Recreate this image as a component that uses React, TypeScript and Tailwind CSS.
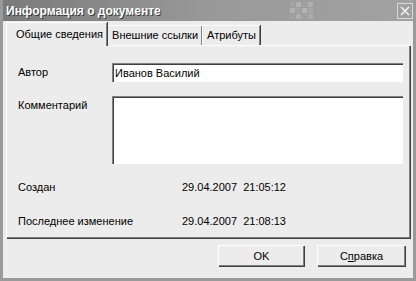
const font = { fontFamily: '"Liberation Sans", Arial, sans-serif' };

function Tab({ label, active }: { label: string; active?: boolean }) {
  if (active) {
    return (
      <div className="relative z-10 -mb-px flex h-[24px] items-center border-t border-l border-white bg-[#ececec] pr-[4px] pl-[9px] shadow-[inset_-1px_0_0_#808080,1px_0_0_#404040]">
        {label}
      </div>
    );
  }
  return (
    <div className="mt-[3px] flex h-[20px] items-center border-t border-l border-white bg-[#ececec] px-[4px] shadow-[inset_-1px_0_0_#808080,1px_0_0_#404040]">
      {label}
    </div>
  );
}

export default function App() {
  return (
    <div
      className="flex h-[281px] w-[416px] flex-col overflow-hidden border-[3px] border-t-0 border-[#9a9a9a] bg-[#ececec] text-[11px] text-black"
      style={font}
    >
      {/* title bar */}
      <div className="-mx-[3px] flex h-[21px] shrink-0 items-center justify-between bg-gradient-to-r from-[#7a7a7a] via-[#999999] to-[#a2a2a2] pr-[3px] pl-[6px]">
        <span className="text-[12px] font-bold text-white [text-shadow:1px_1px_0_#3a3a3a]">
          Информация о документе
        </span>
        <div className="flex items-center gap-[84px]">
          <div className="grid grid-cols-4 gap-[1px] opacity-70">
            <div className="h-[5px] w-[5px] bg-[#a8a8a8]" />
            <div className="h-[5px] w-[5px] bg-[#bcbcbc]" />
            <div className="h-[5px] w-[5px] bg-[#a4a4a4]" />
            <div className="h-[5px] w-[5px] bg-[#b6b6b6]" />
            <div className="h-[5px] w-[5px] bg-[#bababa]" />
            <div className="h-[5px] w-[5px] bg-[#a6a6a6]" />
            <div className="h-[5px] w-[5px] bg-[#c0c0c0]" />
            <div className="h-[5px] w-[5px] bg-[#aaaaaa]" />
            <div className="h-[5px] w-[5px] bg-[#a2a2a2]" />
            <div className="h-[5px] w-[5px] bg-[#b8b8b8]" />
            <div className="h-[5px] w-[5px] bg-[#a4a4a4]" />
            <div className="h-[5px] w-[5px] bg-[#b2b2b2]" />
          </div>
          <div className="flex h-[16px] w-[16px] items-center justify-center border border-[#d8d8d8] bg-[#a0a0a0]">
            <svg width="10" height="10" viewBox="0 0 10 10">
              <path d="M1 1 L9 9 M9 1 L1 9" stroke="#f0f0f0" strokeWidth="1.6" />
            </svg>
          </div>
        </div>
      </div>

      {/* tabs */}
      <div className="ml-[3px] flex h-[24px] items-end">
        <Tab label="Общие сведения" active />
        <Tab label="Внешние ссылки" />
        <Tab label="Атрибуты" />
      </div>

      {/* panel */}
      <div className="mr-[3px] ml-[3px] flex h-[193px] flex-col border-t border-l border-white pr-[7px] pl-[11px] shadow-[inset_-1px_-1px_0_#808080,1px_1px_0_#404040]">
        <div className="mt-[17px] flex items-center">
          <span className="w-[94px]">Автор</span>
          <div className="flex h-[19px] flex-1 items-center border-t border-l border-[#808080] bg-white pl-[2px] shadow-[inset_1px_1px_0_#404040]">
            Иванов Василий
          </div>
        </div>
        <div className="mt-[14px] flex items-start">
          <span className="mt-[1px] w-[94px]">Комментарий</span>
          <div className="h-[68px] flex-1 border-t border-l border-[#808080] bg-white shadow-[inset_1px_1px_0_#404040]" />
        </div>
        <div className="mt-[15px] flex items-center">
          <span className="w-[164px]">Создан</span>
          <span>29.04.2007&nbsp;&nbsp;21:05:12</span>
        </div>
        <div className="mt-[17px] flex items-center">
          <span className="w-[164px]">Последнее изменение</span>
          <span>29.04.2007&nbsp;&nbsp;21:08:13</span>
        </div>
      </div>

      {/* buttons */}
      <div className="mt-[7px] flex justify-end gap-[13px] pr-[8px]">
        <button className="flex h-[21px] w-[86px] items-center justify-center border-t border-l border-white bg-[#ececec] shadow-[inset_-1px_-1px_0_#808080,1px_1px_0_#404040]">
          OK
        </button>
        <button className="flex h-[21px] w-[88px] items-center justify-center border-t border-l border-white bg-[#ececec] shadow-[inset_-1px_-1px_0_#808080,1px_1px_0_#404040]">
          С<span className="underline">п</span>равка
        </button>
      </div>
    </div>
  );
}
